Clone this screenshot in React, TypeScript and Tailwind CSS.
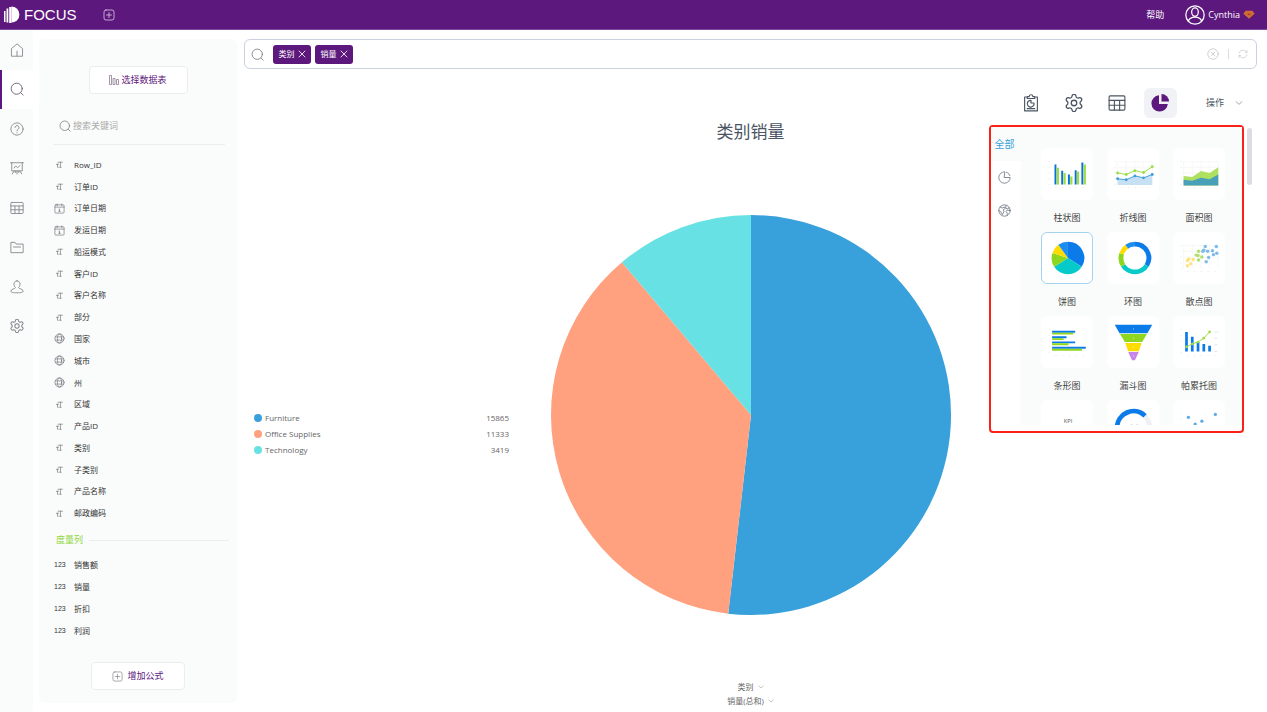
import type { ReactNode } from "react";

type FieldKind = "text" | "date" | "geo";

const fields: { kind: FieldKind; label: string }[] = [
  { kind: "text", label: "Row_ID" },
  { kind: "text", label: "订单ID" },
  { kind: "date", label: "订单日期" },
  { kind: "date", label: "发运日期" },
  { kind: "text", label: "船运模式" },
  { kind: "text", label: "客户ID" },
  { kind: "text", label: "客户名称" },
  { kind: "text", label: "部分" },
  { kind: "geo", label: "国家" },
  { kind: "geo", label: "城市" },
  { kind: "geo", label: "州" },
  { kind: "text", label: "区域" },
  { kind: "text", label: "产品ID" },
  { kind: "text", label: "类别" },
  { kind: "text", label: "子类别" },
  { kind: "text", label: "产品名称" },
  { kind: "text", label: "邮政编码" },
];

const measures = ["销售额", "销量", "折扣", "利润"];

const slices = [
  { label: "Furniture", value: 15865, color: "#38a1db" },
  { label: "Office Supplies", value: 11333, color: "#ffa07f" },
  { label: "Technology", value: 3419, color: "#67e1e3" },
];

function Icon({ children, className = "size-4" }: { children: ReactNode; className?: string }) {
  return (
    <svg
      viewBox="0 0 24 24"
      fill="none"
      stroke="currentColor"
      strokeWidth="1.5"
      strokeLinecap="round"
      strokeLinejoin="round"
      aria-hidden="true"
      className={`${className} shrink-0`}
    >
      {children}
    </svg>
  );
}

const searchPath = (
  <>
    <circle cx="11.5" cy="11.5" r="9.5" />
    <path d="M18.500 18.500l4 4" />
  </>
);

const gearPath = (
  <g transform="translate(-1.800 -1.800) scale(1.150)">
    <path d="M9.671 4.136a2.34 2.34 0 0 1 4.659 0 2.34 2.34 0 0 0 3.319 1.915 2.34 2.34 0 0 1 2.33 4.033 2.34 2.34 0 0 0 0 3.831 2.34 2.34 0 0 1-2.33 4.033 2.34 2.34 0 0 0-3.319 1.915 2.34 2.34 0 0 1-4.659 0 2.34 2.34 0 0 0-3.32-1.915 2.34 2.34 0 0 1-2.33-4.033 2.34 2.34 0 0 0 0-3.831A2.34 2.34 0 0 1 6.35 6.051a2.34 2.34 0 0 0 3.319-1.915" />
    <circle cx="12" cy="12" r="3.2" />
  </g>
);

const tablePath = (
  <>
    <rect x="1.500" y="2.500" width="21" height="19" rx="1.500" />
    <path d="M1.500 8.500h21M1.500 15h21M8.500 8.500v13M15.500 8.500v13" />
  </>
);

const plusBoxPath = (
  <>
    <rect x="2" y="2" width="20" height="20" rx="4" />
    <path d="M12 7v10M7 12h10" />
  </>
);

const rail = [
  { label: "首页", icon: <path d="M2.500 22V9.500L12 1.500l9.500 8V22zM12 22v-8" /> },
  { label: "搜索", icon: searchPath, active: true },
  {
    label: "帮助",
    icon: (
      <>
        <circle cx="12" cy="12" r="10.500" />
        <path d="M8.500 9.500a3.500 3.500 0 1 1 5.500 2.900c-1.300.9-2 1.400-2 2.600M12 18v.5" />
      </>
    ),
  },
  {
    label: "看板",
    icon: (
      <>
        <path d="M1 3h22M3 3v14h18V3M7 17l-3 5M17 17l3 5M12 17v5M9 17v3M15 17v3" />
        <path d="M7 12l3-3.500 3 3 4-3.500" />
      </>
    ),
  },
  { label: "数据", icon: tablePath },
  { label: "资源", icon: <path d="M1.500 21V4h7l2 3h12v14zM6 12h12" /> },
  {
    label: "用户",
    icon: (
      <path d="M12 1.500c-3.200 0-5.200 2.300-5.200 5.500 0 3 1.200 4.800 2.700 6 0 2-8 2-8 6.500 0 1.700 3.500 2.500 10.500 2.500s10.500-.8 10.500-2.500c0-4.500-8-4.500-8-6.500 1.500-1.200 2.700-3 2.700-6 0-3.200-2-5.500-5.200-5.500z" />
    ),
  },
  { label: "设置", icon: gearPath },
];

function Chevron({ className }: { className: string }) {
  return (
    <Icon className={className}>
      <path d="M3 8l9 8 9-8" />
    </Icon>
  );
}

function FieldIcon({ kind }: { kind: FieldKind }) {
  if (kind === "date") {
    return (
      <Icon className="size-[11px]">
        <rect x="2" y="4" width="20" height="18" rx="2" />
        <path d="M2 9h20M7 2v4M17 2v4M11 13h1v5M10 18h4" />
      </Icon>
    );
  }
  if (kind === "geo") {
    return (
      <Icon className="size-[11px]">
        <circle cx="12" cy="12" r="10" />
        <ellipse cx="12" cy="12" rx="4.500" ry="10" />
        <path d="M3 8.500h18M3 15.500h18" />
      </Icon>
    );
  }
  return (
    <Icon className="size-[11px]">
      <path d="M9 7h9.500M14 7v11M12.500 18h3M5 11.500h5M7.500 11.500V18h2" />
    </Icon>
  );
}

function TopBar() {
  return (
    <header className="flex h-[30px] items-center border-b border-[#7e4a9c] bg-[#5d187d] pr-3 pl-1 text-white">
      <a href="#" className="flex items-center gap-1">
        <svg viewBox="0 0 16 17" className="h-[17px] w-4" fill="currentColor" aria-hidden="true">
          <rect x="0" y="5" width="1.500" height="11" />
          <rect x="2.500" y="2.500" width="1.800" height="14" />
          <rect x="5.200" y="1" width="2.200" height="16" />
          <path d="M7.400 .5a8 8 0 0 1 0 16z" />
        </svg>
        <span className="font-['Liberation_Sans',sans-serif] text-[15px] leading-4">FOCUS</span>
      </a>
      <button type="button" aria-label="新建" className="ml-[26px] text-[#e3d3ec]">
        <Icon className="size-3">{plusBoxPath}</Icon>
      </button>
      <nav className="ml-auto flex items-center">
        <a href="#help" className="mr-[21px] text-[9px]">帮助</a>
        <a href="#me" className="flex items-center gap-[3px] text-[9px]">
          <Icon className="size-5">
            <circle cx="12" cy="12" r="11" />
            <ellipse cx="12" cy="8.500" rx="4" ry="5" />
            <path d="M4 19.500c1-3.500 4.500-5 8-5s7 1.500 8 5" />
          </Icon>
          Cynthia
          <svg viewBox="0 0 14 11" className="h-[11px] w-3" aria-hidden="true">
            <path d="M3 1h8l2.500 3.500L7 10.500.5 4.500z" fill="#cf6d33" />
            <path d="M4.500 4.500 7 6.500l2.500-2z" fill="#8b3c30" />
          </svg>
        </a>
      </nav>
    </header>
  );
}

function Rail() {
  return (
    <nav className="w-[33px] shrink-0 bg-[#fafcfb]" aria-label="主导航">
      <div className="grid h-[316px] auto-rows-fr">
        {rail.map((item) => (
          <a
            key={item.label}
            href="#"
            aria-label={item.label}
            className={
              item.active
                ? "flex items-center justify-center border-l-2 border-[#5d187d] bg-white pr-0.5 text-[#67576f]"
                : "flex items-center justify-center text-[#85838c]"
            }
          >
            <Icon className="size-3.5">{item.icon}</Icon>
          </a>
        ))}
      </div>
    </nav>
  );
}

function FieldPanel() {
  return (
    <aside className="mx-1.5 mt-[9px] mb-[9px] flex w-[198px] shrink-0 flex-col rounded-md bg-[#fafcfb] pt-[27px] text-[8px] text-[#333]">
      <button
        type="button"
        className="flex h-7 w-[99px] items-center justify-center gap-0.5 self-center rounded-sm border border-[#eceeee] bg-white text-[9px] text-[#5d187d]"
      >
        <svg viewBox="0 0 10 10" className="size-2.5 text-[#8b7b91]" fill="none" stroke="currentColor" strokeWidth=".8" aria-hidden="true">
          <path d="M.5 9.500v-9h2v9zM4 9.500v-6h2v6zM7.500 9.500v-5h2v5z" />
        </svg>
        选择数据表
      </button>

      <label className="mt-[13px] mr-3 ml-3.5 flex h-[38px] items-center gap-0.5 border-b border-[#eceeee] pl-1.5 text-[#77747d]">
        <Icon className="size-3">{searchPath}</Icon>
        <input
          type="text"
          aria-label="搜索关键词"
          placeholder="搜索关键词"
          className="w-full bg-transparent text-[9px] outline-none placeholder:text-[#aaa]"
        />
      </label>

      <ul className="mt-[9px] grid h-[370px] auto-rows-fr">
        {fields.map((field) => (
          <li key={field.label} className="flex items-center gap-[9px] pl-[15px]">
            <span className="text-[#77747d]"><FieldIcon kind={field.kind} /></span>
            {field.label}
          </li>
        ))}
      </ul>

      <div className="mt-2 mr-2 ml-[17px] flex h-4 items-center gap-1.5">
        <h2 className="text-[9px] text-[#8fd63c]">度量列</h2>
        <span className="h-px flex-1 bg-[#eceeee]" />
      </div>

      <ul className="mt-1.5 grid h-[88px] auto-rows-fr">
        {measures.map((name) => (
          <li key={name} className="flex items-center pl-[15px]">
            <span className="w-5 font-['Liberation_Sans',sans-serif] text-[7px]">123</span>
            {name}
          </li>
        ))}
      </ul>

      <button
        type="button"
        className="mt-5 flex h-7 w-[94px] items-center justify-center gap-1 self-center rounded-sm border border-[#eceeee] bg-white text-[9px] text-[#5d187d]"
      >
        <Icon className="size-[11px] text-[#85838c]">{plusBoxPath}</Icon>
        增加公式
      </button>
    </aside>
  );
}

function SearchBar() {
  return (
    <div className="flex h-[30px] items-center rounded-md border border-[#cbd1de] pr-2 pl-1.5">
      <Icon className="size-[13px] text-[#77747d]">{searchPath}</Icon>
      <div className="ml-[9px] flex gap-1">
        {["类别", "销量"].map((tag) => (
          <span key={tag} className="flex h-[19px] w-[38px] items-center justify-center gap-[3px] rounded-[3px] bg-[#5d187d] text-[8px] text-white">
            {tag}
            <button type="button" aria-label={`移除${tag}`}>
              <Icon className="size-2">
                <path d="M3 3l18 18M21 3L3 21" strokeWidth="2.500" />
              </Icon>
            </button>
          </span>
        ))}
      </div>
      <input type="text" aria-label="搜索" className="mx-2 min-w-0 flex-1 text-[9px] outline-none" />
      <div className="flex items-center gap-[9px] text-[#c3c3c8]">
        <button type="button" aria-label="清空">
          <Icon className="size-3">
            <circle cx="12" cy="12" r="10.500" />
            <path d="M8 8l8 8M16 8l-8 8" />
          </Icon>
        </button>
        <span className="h-2.5 w-px bg-[#dcdde2]" />
        <button type="button" aria-label="刷新">
          <Icon className="size-2.5">
            <path d="M2.500 10A10 10 0 0 1 21 8M21.500 14A10 10 0 0 1 3 16M21.500 3.500V8.500h-4M2.500 20.500v-5h4" />
          </Icon>
        </button>
      </div>
    </div>
  );
}

function Toolbar() {
  const button = "flex h-[30px] w-[33px] items-center justify-center rounded-md";
  return (
    <div className="mt-[19px] mr-3.5 flex items-center justify-end gap-2.5 text-[#4b5563]">
      <button type="button" aria-label="报表" className={button}>
        <Icon className="size-[18px]">
          <path d="M7 4H3.500v18.500h17V4H17M7 6V3.500h2.500a2.500 2.500 0 0 1 5 0H17V6zM7 19.500h10M16 12a4.500 4.500 0 1 1-4-3.500V12z" />
        </Icon>
      </button>
      <button type="button" aria-label="配置" className={button}>
        <Icon className="size-[18px]">{gearPath}</Icon>
      </button>
      <button type="button" aria-label="表格" className={button}>
        <Icon className="size-[18px]">{tablePath}</Icon>
      </button>
      <button type="button" aria-label="图表" className={`${button} bg-[#f1f2f5] text-[#5d187d]`}>
        <svg viewBox="0 0 18 18" className="size-[18px]" fill="currentColor" aria-hidden="true">
          <path d="M8 1.200V10h8.800A8.200 8.200 0 1 1 8 1.200z" />
          <path d="M10.500 0A7.500 7.500 0 0 1 18 7.500h-7.500z" />
        </svg>
      </button>
      <button type="button" className="ml-[19px] flex items-center gap-[11px] text-[9px]">
        操作
        <Chevron className="size-2" />
      </button>
    </div>
  );
}

function Legend() {
  return (
    <ul className="mt-[292px] ml-2.5 w-[255px] text-[8px] text-[#666]">
      {slices.map((slice) => (
        <li key={slice.label} className="flex h-4 items-center">
          <span className="mr-[3px] size-2 rounded-full" style={{ backgroundColor: slice.color }} />
          {slice.label}
          <span className="ml-auto">{slice.value}</span>
        </li>
      ))}
    </ul>
  );
}

// point on a circle, t in turns clockwise from 12 o'clock
function point(t: number, r: number, c: number) {
  const a = t * 2 * Math.PI;
  return `${c + r * Math.sin(a)} ${c - r * Math.cos(a)}`;
}

function wedge(from: number, to: number, r: number, c: number) {
  return `M${c} ${c}L${point(from, r, c)}A${r} ${r} 0 ${to - from > 0.5 ? 1 : 0} 1 ${point(to, r, c)}Z`;
}

function Pie() {
  const total = slices.reduce((sum, s) => sum + s.value, 0);
  let start = 0;
  return (
    <svg viewBox="0 0 400 400" className="w-full" role="img" aria-label="类别销量">
      {slices.map((slice) => {
        const from = start;
        start += slice.value / total;
        return <path key={slice.label} d={wedge(from, start, 200, 200)} fill={slice.color} />;
      })}
    </svg>
  );
}

const miniSlices = [
  { from: 0, to: 0.34, color: "#0a7be8" },
  { from: 0.34, to: 0.66, color: "#06c9c9" },
  { from: 0.66, to: 0.8, color: "#8fd61e" },
  { from: 0.8, to: 0.9, color: "#ffdc00" },
  { from: 0.9, to: 1, color: "#1c8df0" },
];

const grid = (
  <path d="M10 13h36M10 19h36M10 25h36M10 13v24M19 13v24M28 13v24M37 13v24M46 13v24" stroke="#f1f2f3" strokeWidth=".6" />
);

const ticks = (
  <path d="M7 13h1M7 19h1M7 25h1M7 31h1M7 37h1M14 40h1M21 40h1M28 40h1M35 40h1M42 40h1" stroke="#e3e5e8" />
);

const chartTypes: { label: string; art: ReactNode; active?: boolean; peek?: boolean }[] = [
  {
    label: "柱状图",
    art: (
      <>
        {ticks}
        <path d="M14 37V16M21 37V22.500M28 37V26.500M35 37V22M42 37V14" stroke="#0a6fd8" strokeWidth="2" />
        <path d="M16.500 37V19.500M23.500 37V25M30.500 37V28.500M37.500 37V23.500M44.500 37V16" stroke="#9ade43" strokeWidth="2.300" />
      </>
    ),
  },
  {
    label: "折线图",
    art: (
      <>
        {grid}
        {ticks}
        <path d="M10 31l9 1 9-4 9 2 9-3.500V37.500H10z" fill="#c7e0f4" />
        <path d="M10 31l9 1 9-4 9 2 9-3.500" stroke="#3d9ddf" fill="none" />
        <path d="M10 25l9 1.500 9-4 9 2 9-6" stroke="#9ade43" fill="none" />
        {[[10, 31], [19, 32], [28, 28], [37, 30], [46, 26.5]].map(([x, y]) => (
          <circle key={x} cx={x} cy={y} r="1.500" fill="#3d9ddf" />
        ))}
        {[[10, 25], [19, 26.5], [28, 22.5], [37, 24.5], [46, 18.5]].map(([x, y]) => (
          <circle key={x} cx={x} cy={y} r="1.500" fill="#9ade43" />
        ))}
      </>
    ),
  },
  {
    label: "面积图",
    art: (
      <>
        {grid}
        {ticks}
        <path d="M10 28l9 1 9-6 9 2 9-6v19H10z" fill="#ade15f" />
        <path d="M10 32l9 1 9-3 9 1.500 9-5v11.500H10z" fill="#4a9fb9" />
      </>
    ),
  },
  {
    label: "饼图",
    active: true,
    art: (
      <g transform="translate(1 0)">
        {miniSlices.map((s) => <path key={s.from} d={wedge(s.from, s.to, 17, 26)} fill={s.color} />)}
      </g>
    ),
  },
  {
    label: "环图",
    art: (
      <g transform="translate(2 0)">
        {miniSlices.map((s) => <path key={s.from} d={wedge(s.from, s.to, 17, 26)} fill={s.color} />)}
        <circle cx="26" cy="26" r="12" fill="#fff" />
      </g>
    ),
  },
  {
    label: "散点图",
    art: (
      <>
        {grid}
        {ticks}
        {[[14, 34], [14, 28.5], [15.5, 27], [17.5, 32], [20, 27.5]].map(([x, y]) => (
          <circle key={`${x}-${y}`} cx={x} cy={y} r="1.800" fill="#ffe27a" />
        ))}
        {[[23, 23], [25, 23.5], [25.5, 19], [25.5, 28], [29, 25]].map(([x, y]) => (
          <circle key={`${x}-${y}`} cx={x} cy={y} r="1.800" fill="#b0df71" />
        ))}
        {[[30, 19], [32.5, 14], [31, 18], [35, 19], [36, 25.5], [33.5, 30], [40, 18.5], [41, 22.5], [44, 14], [44.5, 21]].map(([x, y]) => (
          <circle key={`${x}-${y}`} cx={x} cy={y} r="1.800" fill="#7dbbea" />
        ))}
      </>
    ),
  },
  {
    label: "条形图",
    art: (
      <>
        {ticks}
        <path d="M10.500 15.300h24M10.500 21h15M10.500 26.400h24M10.500 32h35" stroke="#0a7be8" strokeWidth="2" />
        <path d="M10.500 17.300h22M10.500 23h12M10.500 28.400h17M10.500 34h31" stroke="#8fd61e" strokeWidth="2" />
      </>
    ),
  },
  {
    label: "漏斗图",
    art: (
      <>
        <path d="M7 8h39l-5 9H12z" fill="#0a7be8" />
        <path d="M12.500 17.800h28L35.500 26h-18z" fill="#8fd61e" />
        <path d="M18 27h17l-3 8.500H21z" fill="#ffdc00" />
        <path d="M21 36.500h11l-4 8.500h-3z" fill="#c685ea" />
        <path d="M26 12.500h1M26 22h1M26 31.500h1M26 40.500h1" stroke="#fff" strokeOpacity=".7" />
      </>
    ),
  },
  {
    label: "帕累托图",
    art: (
      <>
        {ticks}
        <path d="M13 36V15.500M19 36V20.500M25 36V26M31 36V28M37 36V30" stroke="#0a7be8" strokeWidth="2.800" />
        <path d="M13 31l6-3 6-2 6-4 6-6.500" stroke="#9ade43" fill="none" />
        {[[13, 31], [19, 28], [25, 26], [31, 22], [37, 15.5]].map(([x, y]) => (
          <circle key={x} cx={x} cy={y} r="1.400" fill="#9ade43" />
        ))}
        <path d="M42 15.500h4M42 22h3M42 29h3M42 36h3" stroke="#e1e3e6" />
      </>
    ),
  },
  {
    label: "指标卡",
    peek: true,
    art: (
      <text x="27" y="23" textAnchor="middle" fontSize="6" fill="#555">KPI</text>
    ),
  },
  {
    label: "仪表图",
    peek: true,
    art: (
      <>
        <path d="M9.500 28a17 17 0 0 1 34 0" stroke="#eef0f3" strokeWidth="5" fill="none" />
        <path d="M9.500 28A17 17 0 0 1 38.500 15.500" stroke="#0a7be8" strokeWidth="5" fill="none" />
        <path d="M23 26a1.500 1.500 0 1 1 0 .1M27 28l3-4M31 26a1 1 0 1 1 0 .1" stroke="#c5c8cd" strokeWidth=".8" />
      </>
    ),
  },
  {
    label: "气泡图",
    peek: true,
    art: (
      <>
        {ticks}
        {[[15, 17], [22, 24], [29, 21], [43, 14]].map(([x, y]) => (
          <circle key={x} cx={x} cy={y} r="1.700" fill="#5dabe6" />
        ))}
      </>
    ),
  },
];

function ChartPicker() {
  return (
    <div className="mt-[7px] flex w-[255px] shrink-0 rounded-sm border-2 border-[#fb2116] bg-white pb-1.5">
      <div className="w-[30px] shrink-0 text-[#6b7280]">
        <button type="button" className="flex h-[34px] w-full items-center justify-center bg-[#fafcfb] pr-[3px] text-[10px] whitespace-nowrap text-[#38a1db]">
          全部
        </button>
        <button type="button" aria-label="图形" className="flex h-[33px] w-full items-center justify-center pr-[3px]">
          <Icon className="size-[13px]">
            <path d="M12 1.500A10.500 10.500 0 1 0 22.500 12H12zM15.500 2A10.500 10.500 0 0 1 22 8.500" />
          </Icon>
        </button>
        <button type="button" aria-label="地图" className="flex h-[33px] w-full items-center justify-center pr-[3px]">
          <Icon className="size-[13px]">
            <circle cx="12" cy="12" r="10.500" />
            <path d="M4 5.500l4 2 4-2 1.500 3-3.500 2 1 4-3 5-3-5.500-3.500-2M15 3l-1 4 3 2 4-2M22 12l-5-1-2 3 2 3v4" />
          </Icon>
        </button>
      </div>
      <div className="grid h-[298px] flex-1 auto-rows-[84px] grid-cols-[repeat(3,52px)] gap-x-3.5 overflow-hidden bg-[#fafcfb] pt-[21px] pl-5">
        {chartTypes.map((type) => (
          <button
            key={type.label}
            type="button"
            aria-label={type.label}
            className="flex flex-col items-center text-[9px] text-[#444]"
          >
            <span
              className={
                type.active
                  ? "size-[52px] rounded-md border border-[#a5d3f0] bg-white"
                  : "size-[52px] rounded-md border border-white bg-white"
              }
            >
              <svg viewBox="0 0 52 52" className="size-full" fill="none" aria-hidden="true">{type.art}</svg>
            </span>
            {!type.peek && <span className="mt-[11px] leading-[14px]">{type.label}</span>}
          </button>
        ))}
      </div>
    </div>
  );
}

export default function App() {
  return (
    <div className="flex min-h-screen flex-col bg-white font-['Open_Sans','Noto_Sans_CJK_SC',sans-serif]">
      <TopBar />
      <div className="flex flex-1">
        <Rail />
        <FieldPanel />
        <main className="flex min-w-0 flex-1 flex-col pt-[9px] pr-2.5 pl-px">
          <SearchBar />
          <Toolbar />
          <div className="grid flex-1 grid-cols-[1fr_400px_1fr]">
            <Legend />
            <section className="flex flex-col items-center">
              <h1 className="mt-1 mb-[73px] text-[17px] leading-5 text-[#4b5563]">类别销量</h1>
              <Pie />
              <div className="mt-auto mb-1 flex flex-col items-center text-[8px] leading-[14px] text-[#666]">
                <button type="button" className="flex items-center gap-1">
                  类别
                  <Chevron className="size-1.5" />
                </button>
                <button type="button" className="flex items-center gap-1">
                  销量(总和)
                  <Chevron className="size-1.5" />
                </button>
              </div>
            </section>
            <div className="flex items-start justify-end gap-[3px] pr-[5px]">
              <ChartPicker />
              <div className="mt-2.5 h-[57px] w-[5px] rounded-full bg-[#dcdde0]" />
            </div>
          </div>
        </main>
      </div>
    </div>
  );
}
